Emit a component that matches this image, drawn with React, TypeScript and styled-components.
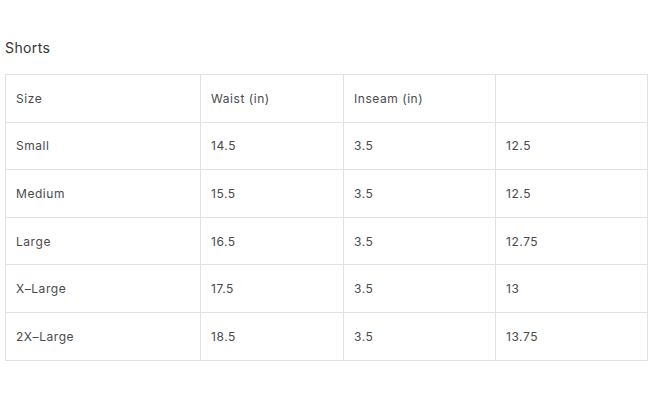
import styled, { createGlobalStyle } from 'styled-components';

const GlobalStyle = createGlobalStyle`
  html, body {
    margin: 0;
    padding: 0;
    background: #ffffff;
  }
  body {
    font-family: Inter, "Noto Sans", Arial, sans-serif;
    -webkit-font-smoothing: antialiased;
  }
`;

const Page = styled.div`
  padding: 39px 4px 0 5px;
`;

const Title = styled.h2`
  margin: 0 0 17px;
  font-size: 14px;
  font-weight: 400;
  color: #333;
  line-height: 18px;
  letter-spacing: 0.4px;
`;

const Table = styled.table`
  width: 643px;
  border-collapse: collapse;
  table-layout: fixed;
  border: 1px solid #e2e2e2;
`;

const Cell = styled.td`
  height: 46.6px;
  padding: 0 0 0 10px;
  border: 1px solid #e2e2e2;
  font-size: 12px;
  color: #4a4a4a;
  letter-spacing: 0.55px;
  vertical-align: middle;
`;

const columns = [195, 143, 152, 152];

const header = ['Size', 'Waist (in)', 'Inseam (in)', ''];

const rows = [
  ['Small', '14.5', '3.5', '12.5'],
  ['Medium', '15.5', '3.5', '12.5'],
  ['Large', '16.5', '3.5', '12.75'],
  ['X–Large', '17.5', '3.5', '13'],
  ['2X–Large', '18.5', '3.5', '13.75'],
];

export default function App() {
  return (
    <>
      <GlobalStyle />
      <Page>
        <Title>Shorts</Title>
        <Table>
          <colgroup>
            {columns.map((w, i) => (
              <col key={i} style={{ width: w }} />
            ))}
          </colgroup>
          <tbody>
            <tr>
              {header.map((h, i) => (
                <Cell key={i}>{h}</Cell>
              ))}
            </tr>
            {rows.map((r, i) => (
              <tr key={i}>
                {r.map((c, j) => (
                  <Cell key={j}>{c}</Cell>
                ))}
              </tr>
            ))}
          </tbody>
        </Table>
      </Page>
    </>
  );
}
